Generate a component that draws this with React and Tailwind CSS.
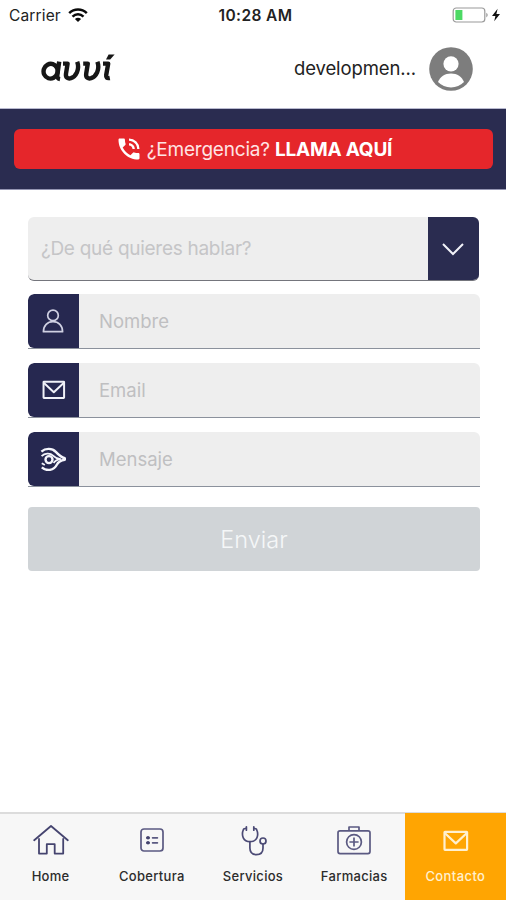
import React from "react";

const EmailIcon = ({ className }) => (
  <svg viewBox="0 0 26 22" className={className} fill="none" stroke="currentColor" strokeWidth="2.2" strokeLinejoin="round">
    <rect x="1.5" y="1.8" width="22.6" height="18" rx="0.5" />
    <path d="M2 3.2 L12.8 13.4 L23.6 3.2" />
  </svg>
);

const PersonIcon = () => (
  <svg viewBox="0 0 22 26" className="-ml-px h-[26px] w-[22px]" fill="none" stroke="#cfd0e2" strokeWidth="1.7" strokeLinejoin="round">
    <circle cx="11" cy="7.4" r="5.3" />
    <path d="M1.4 23.7 C1.4 17.5 5.5 13.6 11 13.6 C16.5 13.6 20.6 17.5 20.6 23.7 Z" />
  </svg>
);

const WhistleIcon = () => (
  <svg viewBox="0 0 26 24" className="-ml-px -mt-px h-[24px] w-[26px]" fill="none" stroke="#f4f5fb" strokeWidth="2.4" strokeLinecap="butt" strokeLinejoin="round">
    <circle cx="9" cy="12.6" r="3.5" />
    <path d="M1.4 4.6 C5.4 1 12.2 1 15.8 4.8 C18.4 7.6 20.8 10.2 24.8 11.2 V12.8 C20.6 13.4 18.2 15 16.8 17.8 C13.8 23.8 6.4 24.4 1.8 20.4" />
    <path d="M1.6 9.2 C4.4 6.2 10 5.6 13 8.6 C15 10.6 17 11.8 20.4 12.1 C16.6 12.6 14.6 14.2 13.6 16" strokeWidth="1.8" />
    <path d="M1.8 16.2 L4.8 18" strokeWidth="1.8" />
  </svg>
);

const HomeIcon = () => (
  <svg viewBox="0 0 36 32" className="h-[32px] w-[36px]" fill="none" stroke="#45446f" strokeWidth="1.8" strokeLinecap="round" strokeLinejoin="round">
    <path d="M1.2 16.2 L18 2 L34.8 16.2" />
    <path d="M6 15 V29.6 H13.8 V20.2 H21.7 V29.6 H30.2 V15" />
  </svg>
);

const ListIcon = () => (
  <svg viewBox="0 0 24 26" className="h-[26px] w-[24px]" fill="none" stroke="#5b5a82" strokeWidth="1.7" strokeLinecap="round">
    <rect x="1" y="2" width="22" height="22" rx="3" />
    <path d="M12.6 10.8 H17.4 M12.6 15.8 H17.4" />
    <g fill="#45446f" stroke="none">
      <circle cx="8" cy="10.8" r="1.8" />
      <circle cx="8" cy="15.8" r="1.8" />
      <path d="M6 10.2h4v1.2H6zM6 15.2h4v1.2H6z" />
    </g>
  </svg>
);

const StethoscopeIcon = () => (
  <svg viewBox="0 0 26 32" className="ml-[2px] h-[32px] w-[26px]" fill="none" stroke="#4b4a75" strokeWidth="1.7" strokeLinecap="round" strokeLinejoin="round">
    <path d="M5.2 4.2 L2.6 5 C-0.2 11.5 2.4 17.7 9 17.7 C15.8 17.7 18.4 11.5 15.4 5 L12.8 4.2" />
    <path d="M5.4 2.8 V6.2 M12.8 2.8 V6.2" />
    <path d="M8.9 17.9 V24 C8.9 28.4 11.4 30.6 15.4 30.6 C19.6 30.6 22 28.2 22 24 V20.2" />
    <circle cx="22" cy="17" r="3" />
  </svg>
);

const FirstAidIcon = () => (
  <svg viewBox="0 0 34 30" className="h-[30px] w-[34px]" fill="none" stroke="#5b5a82" strokeWidth="1.7" strokeLinejoin="round">
    <rect x="1" y="5.8" width="32" height="22.8" rx="2" />
    <path d="M12 5.4 V2 H22 V5.4" />
    <circle cx="17" cy="17" r="7.4" />
    <path d="M17 12.4 V21.6 M12.4 17 H21.6" />
  </svg>
);

const StatusBar = () => (
  <div className="flex h-[30px] items-center justify-between pl-[9px] pr-[4px] pt-px text-[#222]">
    <div className="flex w-[120px] items-center gap-[7px]">
      <span className="text-[15.5px] tracking-[0.15px]">Carrier</span>
      <svg viewBox="0 0 20 14" className="-mt-[2px] h-[14px] w-[20px]" fill="none" stroke="#0a0a0a" strokeWidth="2.5">
        <path d="M1.2 5.2 C6.2 0.3 13.8 0.3 18.8 5.2" />
        <path d="M4.5 8.6 C7.7 5.6 12.3 5.6 15.5 8.6" />
        <path d="M6.9 11 Q10 8.4 13.1 11 L10 14 Z" fill="#0a0a0a" stroke="none" />
      </svg>
    </div>
    <span className="text-[15.5px] font-semibold tracking-[0.4px]">10:28 AM</span>
    <div className="flex w-[120px] justify-end">
      <svg viewBox="0 0 50 18" className="-mt-px h-[18px] w-[50px]">
        <rect x="1.2" y="2" width="31.6" height="14" rx="3" fill="#fff" stroke="#9a9a9a" strokeWidth="1.2" />
        <rect x="3.4" y="4" width="7" height="10" fill="#4cd964" />
        <path d="M34.4 6.8 Q36.8 9 34.4 11.4 Z" fill="#8a8a8a" />
        <path d="M45.6 2.8 L40 10 H43.4 L42.2 15.2 L48 8 H44.4 Z" fill="#111" />
      </svg>
    </div>
  </div>
);

const Header = () => (
  <header className="flex h-[79px] items-center justify-between border-b border-[#b9bad0] pl-[41px] pr-[33px]">
    <svg viewBox="0 0 74 30" role="img" aria-label="avvi" className="h-[30px] w-[74px]" fill="none" stroke="#161616" strokeWidth="4.4" strokeLinecap="butt" strokeLinejoin="round">
      <ellipse cx="9.6" cy="17.2" rx="7" ry="7.4" transform="rotate(18 9.6 17.2)" />
      <path d="M18.2 7.6 L16.4 20.4 C16 23.6 16.6 24.8 19 25.2" />
      <path d="M22 9.6 H26.6 L25 19.6 C24.3 23.8 27.2 25 29.9 24.2 C34.8 22.6 39 15.6 36.2 7.8" />
      <path d="M42.2 9.6 H46.8 L45.2 19.6 C44.5 23.8 47.4 25 50.1 24.2 C55 22.6 59.2 15.6 56.4 7.8" />
      <path d="M62 9.6 H67.2 L65.2 21 C64.9 23.4 65.8 24.6 68.8 24" />
      <path d="M65 5.6 L67.6 0.6 H73.6 L69.2 5.6 Z" fill="#161616" stroke="none" />
    </svg>
    <div className="flex items-center gap-[13px]">
      <span className="text-[18.5px] tracking-[-0.1px] text-[#222]">developmen...</span>
      <svg viewBox="0 0 44 44" className="h-[44px] w-[44px]">
        <circle cx="22" cy="22" r="21.8" fill="#7d7d7d" />
        <circle cx="22" cy="16.8" r="7.6" fill="#fff" />
        <path d="M9 35 C11 29.5 15.8 26.4 22 26.4 C28.2 26.4 33 29.5 35 35 C31.6 38.6 27 40.4 22 40.4 C17 40.4 12.4 38.6 9 35 Z" fill="#fff" />
      </svg>
    </div>
  </header>
);

const EmergencyBanner = () => (
  <div className="h-[81px] border-b border-[#9495b2] bg-[#2a2c50] pb-[20px] pl-[14px] pr-[13px] pt-[20px]">
    <button className="flex h-[40px] w-full items-center justify-center gap-[4px] rounded-[6px] bg-[#e5262b] text-[19px] text-[#ffe3e3]">
      <svg viewBox="0 0 24 24" className="h-[28px] w-[28px]" fill="#fff">
        <path d="M20 15.5c-1.25 0-2.45-.2-3.57-.57a1.02 1.02 0 0 0-1.02.24l-2.2 2.2a15.045 15.045 0 0 1-6.59-6.59l2.2-2.21a.96.96 0 0 0 .25-1A11.36 11.36 0 0 1 8.5 4c0-.55-.45-1-1-1H4c-.55 0-1 .45-1 1 0 9.39 7.61 17 17 17 .55 0 1-.45 1-1v-3.5c0-.55-.45-1-1-1zM19 12h2a9 9 0 0 0-9-9v2c3.87 0 7 3.13 7 7zm-4 0h2c0-2.76-2.24-5-5-5v2c1.66 0 3 1.34 3 3z" />
      </svg>
      <span className="whitespace-nowrap pt-[3px] tracking-[-0.21px]">
        ¿Emergencia? <strong className="font-bold text-white">LLAMA AQUÍ</strong>
      </span>
    </button>
  </div>
);

const Field = ({ icon, label }) => (
  <label className="flex h-[55px] overflow-hidden rounded-t-[6px] border-b border-[#8b919c] bg-white">
    <span className="flex w-[51px] items-center justify-center rounded-l-[6px] bg-[#262850]">{icon}</span>
    <span className="flex flex-1 items-center bg-[#eeeeee] pl-[20px] pt-px text-[18.5px] text-[#bfbfc1]">{label}</span>
  </label>
);

const Tab = ({ icon, label }) => (
  <div className="flex flex-1 flex-col items-center">
    <div className="flex h-[54px] items-center justify-center pb-[2px]">{icon}</div>
    <span className="text-[13px] font-medium leading-[16px] tracking-[0.3px] text-[#2c2c2c]">{label}</span>
  </div>
);

export default function App() {
  return (
    <div className="flex h-[900px] w-[507px] flex-col overflow-hidden bg-white pr-px font-['Inter','Liberation_Sans',sans-serif]">
      <StatusBar />
      <Header />
      <EmergencyBanner />
      <main className="flex flex-1 flex-col pl-[28px] pr-[26px] pt-[27px]">
        <div className="mr-px flex h-[64px] overflow-hidden rounded-[6px] border-b border-[#74757c] bg-[#eeeeee]">
          <span className="flex flex-1 items-center pl-[13px] pt-[2px] text-[19px] tracking-[-0.28px] text-[#c5c5c7]">¿De qué quieres hablar?</span>
          <span className="-mb-px flex w-[51px] items-center justify-center bg-[#2a2c50]">
            <svg viewBox="0 0 22 13" className="-ml-px h-[13px] w-[22px]" fill="none" stroke="#f1f2f8" strokeWidth="2">
              <path d="M1 1 L11 11 L21 1" />
            </svg>
          </span>
        </div>
        <div className="mt-[13px] flex flex-col gap-[14px]">
          <Field icon={<PersonIcon />} label="Nombre" />
          <Field icon={<EmailIcon className="h-[20px] w-[24px] text-[#f0f1f8]" />} label="Email" />
          <Field icon={<WhistleIcon />} label="Mensaje" />
        </div>
        <button className="mt-[20px] h-[64px] w-full rounded-[4px] bg-[#d0d4d7] pt-px text-[23.5px] font-light text-[#f5f7f8]">Enviar</button>
      </main>
      <nav className="flex h-[88px] border-t-2 border-[#dcdcdc] bg-[#f7f7f7]">
        <Tab icon={<HomeIcon />} label="Home" />
        <Tab icon={<ListIcon />} label="Cobertura" />
        <Tab icon={<StethoscopeIcon />} label="Servicios" />
        <Tab icon={<FirstAidIcon />} label="Farmacias" />
        <div className="-mt-px flex flex-1 flex-col items-center bg-[#ffa502] pt-px text-[#fff0cf]">
          <div className="flex h-[54px] items-center justify-center">
            <EmailIcon className="ml-px h-[22px] w-[26px]" />
          </div>
          <span className="text-[13px] font-medium leading-[16px] tracking-[0.4px]">Contacto</span>
        </div>
      </nav>
    </div>
  );
}
